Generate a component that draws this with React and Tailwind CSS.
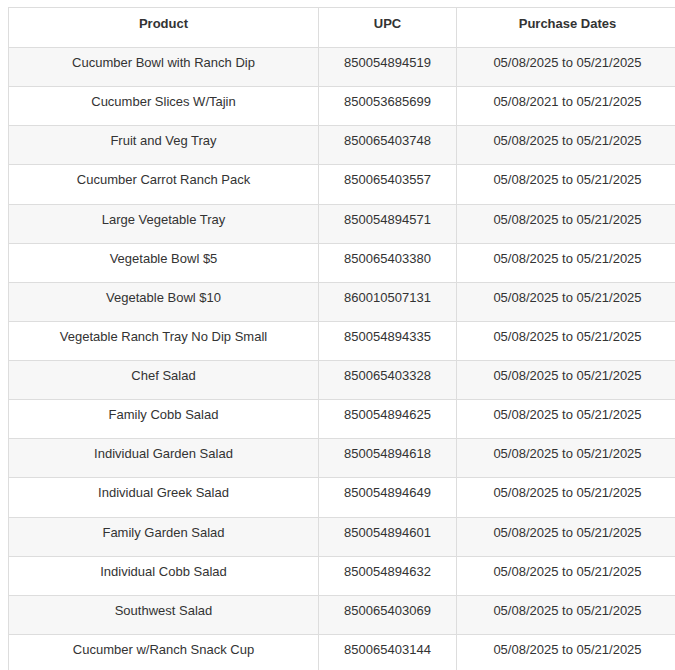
const rows = [
  ["Cucumber Bowl with Ranch Dip", "850054894519", "05/08/2025 to 05/21/2025"],
  ["Cucumber Slices W/Tajin", "850053685699", "05/08/2021 to 05/21/2025"],
  ["Fruit and Veg Tray", "850065403748", "05/08/2025 to 05/21/2025"],
  ["Cucumber Carrot Ranch Pack", "850065403557", "05/08/2025 to 05/21/2025"],
  ["Large Vegetable Tray", "850054894571", "05/08/2025 to 05/21/2025"],
  ["Vegetable Bowl $5", "850065403380", "05/08/2025 to 05/21/2025"],
  ["Vegetable Bowl $10", "860010507131", "05/08/2025 to 05/21/2025"],
  ["Vegetable Ranch Tray No Dip Small", "850054894335", "05/08/2025 to 05/21/2025"],
  ["Chef Salad", "850065403328", "05/08/2025 to 05/21/2025"],
  ["Family Cobb Salad", "850054894625", "05/08/2025 to 05/21/2025"],
  ["Individual Garden Salad", "850054894618", "05/08/2025 to 05/21/2025"],
  ["Individual Greek Salad", "850054894649", "05/08/2025 to 05/21/2025"],
  ["Family Garden Salad", "850054894601", "05/08/2025 to 05/21/2025"],
  ["Individual Cobb Salad", "850054894632", "05/08/2025 to 05/21/2025"],
  ["Southwest Salad", "850065403069", "05/08/2025 to 05/21/2025"],
  ["Cucumber w/Ranch Snack Cup", "850065403144", "05/08/2025 to 05/21/2025"],
];

const App = () => {
  return (
    <div className="h-[670px] w-[675px] overflow-hidden bg-white pl-[8px] pt-[7px] font-['Liberation_Sans',Arial,sans-serif] text-[13px] leading-[20px] text-[#333]">
      <table className="w-[670px] table-fixed border-collapse">
        <colgroup>
          <col className="w-[310px]" />
          <col className="w-[138px]" />
          <col className="w-[222px]" />
        </colgroup>
        <thead>
          <tr className="h-[40px]">
            <th className="border border-[#ddd] pt-[6px] pb-[13px] text-center font-bold">Product</th>
            <th className="border border-[#ddd] pt-[6px] pb-[13px] text-center font-bold">UPC</th>
            <th className="border border-[#ddd] pt-[6px] pb-[13px] text-center font-bold">Purchase Dates</th>
          </tr>
        </thead>
        <tbody>
          {rows.map((r, i) => (
            <tr key={i} className={`h-[39.13px] ${i % 2 === 0 ? "bg-[#f7f7f7]" : "bg-white"}`}>
              <td className="border border-[#ddd] pt-[5px] pb-[13px] text-center align-top">{r[0]}</td>
              <td className="border border-[#ddd] pt-[5px] pb-[13px] text-center align-top">{r[1]}</td>
              <td className="border border-[#ddd] pt-[5px] pb-[13px] text-center align-top">{r[2]}</td>
            </tr>
          ))}
        </tbody>
      </table>
    </div>
  );
};

export default App;
